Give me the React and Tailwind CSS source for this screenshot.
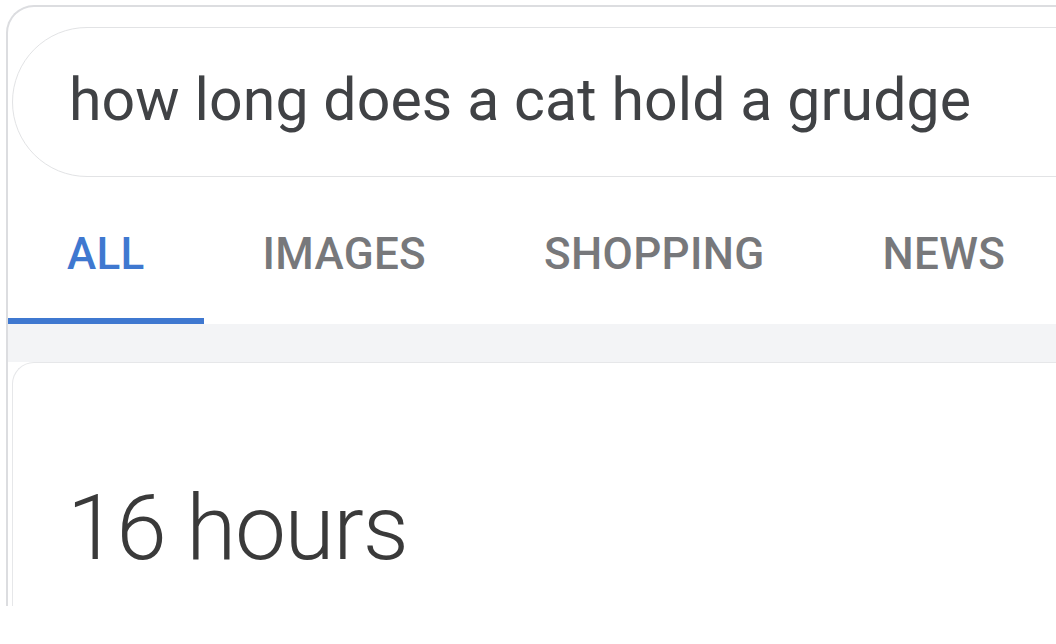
export default function App() {
  const tabs = ["ALL", "IMAGES", "SHOPPING", "NEWS"];
  return (
    <div className="w-[1056px] h-[644px] bg-white overflow-hidden pl-[6px] pt-[5px]" style={{ fontFamily: "Roboto, 'Noto Sans', sans-serif" }}>
      <div className="h-[601px] w-[1100px] border-l-2 border-t-2 border-[#dcdde0] rounded-tl-[28px] flex flex-col">
        <div className="pt-[20px] pl-[4px]">
          <div className="h-[150px] w-[1200px] rounded-l-full border border-[#e2e3e5] flex items-center pl-[56px] pb-[6px]">
            <span className="text-[59px] text-[#404245] leading-none tracking-[0.1px]">how long does a cat hold a grudge</span>
          </div>
        </div>
        <div className="flex items-end h-[147px]">
          {tabs.map((t, i) => (
            <div key={t} className={`px-[59px] h-[147px] flex items-center pt-[12px] ${i === 0 ? "border-b-[6px] border-[#3f78d0]" : "border-b-[6px] border-transparent"}`}>
              <span className={`text-[44px] font-medium leading-none tracking-[0.3px] ${i === 0 ? "text-[#3f78d0]" : "text-[#77787b]"}`}>{t}</span>
            </div>
          ))}
        </div>
        <div className="bg-[#f3f4f6] h-[38px]"></div>
        <div className="flex-1 ml-[4px] rounded-tl-[22px] border-l border-t border-[#e6e7e9] bg-white pl-[54px] pt-[120px]">
          <span className="text-[91px] font-light text-[#3a3a3a] leading-none tracking-[-1.3px]">16 hours</span>
        </div>
      </div>
    </div>
  );
}
